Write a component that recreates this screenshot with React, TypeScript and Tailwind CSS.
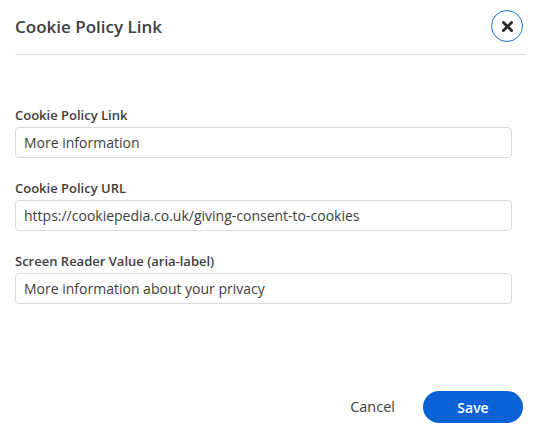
import React from "react";

const FIELDS = [
  { label: "Cookie Policy Link", value: "More information" },
  { label: "Cookie Policy URL", value: "https://cookiepedia.co.uk/giving-consent-to-cookies" },
  { label: "Screen Reader Value (aria-label)", value: "More information about your privacy" },
];

function CloseIcon() {
  return (
    <svg viewBox="0 0 16 16" className="w-[13px] h-[13px]">
      <path d="M3 3 L13 13 M13 3 L3 13" stroke="#2b2b2b" strokeWidth="3.6" strokeLinecap="round" />
    </svg>
  );
}

export default function App() {
  return (
    <div
      className="w-[541px] h-[435px] bg-white flex flex-col text-[#3e3e3c]"
      style={{ fontFamily: '"Open Sans", "Noto Sans", sans-serif' }}
    >
      {/* Header */}
      <div className="mx-[15px] h-[55px] flex items-center justify-between border-b border-[#dddbda] pt-[1px]">
        <h2 className="text-[17px] font-semibold text-[#3e3e3c] -mt-[2px]">Cookie Policy Link</h2>
        <button className="w-[32px] h-[32px] mr-[3px] -mt-[3px] rounded-full border border-[#1b74e4] flex items-center justify-center">
          <CloseIcon />
        </button>
      </div>

      {/* Form */}
      <div className="px-[15px] pt-[52px] flex flex-col gap-[22px] w-[527px]">
        {FIELDS.map((f) => (
          <div key={f.label} className="flex flex-col">
            <label className="text-[13px] font-semibold text-[#3e3e3c] leading-[17px] mb-[3px]">{f.label}</label>
            <div className="h-[31px] rounded-[4px] border border-[#dddbda] flex items-center px-[8px] text-[14px] text-[#3e3e3c]">
              {f.value}
            </div>
          </div>
        ))}
      </div>

      {/* Footer */}
      <div className="mt-auto mb-[12px] px-[18px] flex items-center justify-end gap-[28px]">
        <button className="text-[14.5px] text-[#3e3e3c]">Cancel</button>
        <button className="w-[100px] h-[32px] rounded-full bg-[#0b62d6] text-white text-[14px] font-semibold">
          Save
        </button>
      </div>
    </div>
  );
}
